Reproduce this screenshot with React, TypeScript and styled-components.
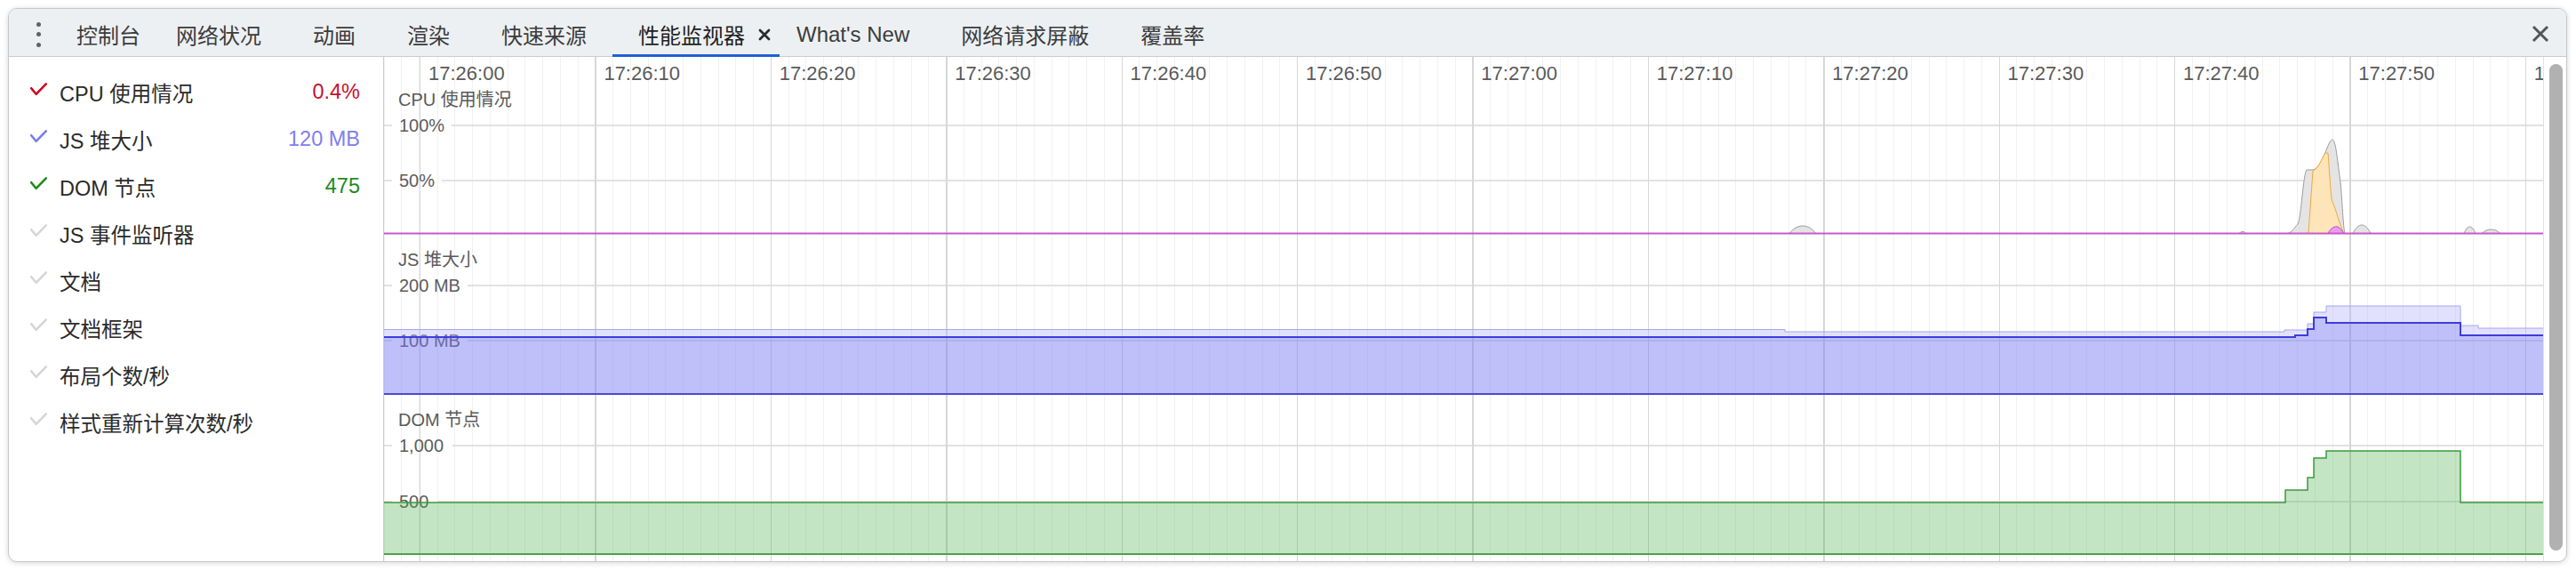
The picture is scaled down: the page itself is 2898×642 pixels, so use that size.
import React from 'react'
import styled, { createGlobalStyle, css } from 'styled-components'

const GlobalStyle = createGlobalStyle`
  html, body {
    margin: 0;
    background: #fff;
  }

  body {
    font-family: "Liberation Sans", "Noto Sans CJK SC", sans-serif;
  }
`

const PANE_WIDTH = 2429
const MAJOR = 197.4
const BASE = 167.5

type Seg = [number, number]

const stepPoints = (segs: Seg[], end: number): Seg[] => {
  const pts: Seg[] = []
  segs.forEach(([x, y], i) => {
    const next = i + 1 < segs.length ? segs[i + 1][0] : end
    pts.push([x, y], [next, y])
  })
  return pts
}

const toPath = (pts: Seg[]) => 'M' + pts.map(([x, y]) => `${x} ${y}`).join(' L')

const hump = (x1: number, x2: number, peak: number) => {
  const c = BASE - (BASE - peak) / 0.75
  const w = x2 - x1
  return `M${x1} ${BASE} C${x1 + w * 0.3} ${c} ${x1 + w * 0.7} ${c} ${x2} ${BASE} Z`
}

const Window = styled.div`
  box-sizing: border-box;
  height: 623px;
  margin: 9px 10px 10px 9px;
  display: flex;
  flex-direction: column;
  overflow: hidden;

  background: #fff;
  border: 1px solid #c5c8cb;
  border-radius: 10px;
  box-shadow: 0 1px 6px rgba(0, 0, 0, .16);
`

const TabBar = styled.div`
  flex-shrink: 0;
  box-sizing: border-box;
  height: 54px;
  display: flex;
  align-items: stretch;

  background: #edf0f2;
  border-bottom: 1px solid #c9ccd0;
`

const MenuButton = styled.div`
  width: 66px;
  padding-top: 4px;
  display: flex;
  flex-direction: column;
  align-items: center;
  justify-content: center;
  gap: 6.5px;
`

const Dot = styled.span`
  width: 5px;
  height: 5px;
  border-radius: 50%;
  background: #5f6368;
`

const TabStrip = styled.div`
  display: flex;
  align-items: stretch;
`

const Tab = styled.div<{ $active?: boolean }>`
  position: relative;
  display: flex;
  align-items: center;
  padding: 4px 29px 0;

  font-size: 24px;
  color: #3c3c3c;
  white-space: nowrap;

  &:first-child {
    padding-left: 10px;
    padding-right: 11px;
  }

  ${({ $active }) => $active && css`
    padding-right: 10px;
    margin-right: -10px;
    color: #1f1f1f;

    &::after {
      content: '';
      position: absolute;
      left: 0;
      right: 0;
      bottom: -1px;
      height: 3px;
      background: #1f5fd6;
    }
  `}
`

const TabClose = styled.svg`
  margin-left: 15px;
`

const Spacer = styled.div`
  flex: 1;
`

const CloseButton = styled.div`
  width: 40px;
  margin-right: 9px;
  padding-top: 2px;
  display: flex;
  align-items: center;
  justify-content: center;
`

const Body = styled.div`
  flex: 1;
  min-height: 0;
  display: flex;
`

const Sidebar = styled.div`
  flex-shrink: 0;
  box-sizing: border-box;
  width: 422px;
  padding: 13px 26px 0 24px;

  border-right: 1px solid #cdcdcd;
`

const MetricRow = styled.div`
  height: 53px;
  display: flex;
  align-items: center;

  font-size: 23.5px;
  color: #2b2b2b;
`

const Check = styled.svg`
  flex-shrink: 0;
  margin: 0 14px 6px 0;
`

const MetricName = styled.span`
  flex: 1;
`

const MetricValue = styled.span<{ $color: string }>`
  color: ${({ $color }) => $color};
`

const ChartPane = styled.div`
  flex: 1;
  min-width: 0;
  display: flex;
  flex-direction: column;
  overflow: hidden;

  border-right: 1px solid #e2e2e2;
  background-color: #fff;
  background-image:
    repeating-linear-gradient(to right, #d7d7d7 0 1.5px, transparent 1.5px ${MAJOR}px),
    repeating-linear-gradient(to right, #f1f1f1 0 1px, transparent 1px ${MAJOR / 10}px);
  background-position: 40px 0, 40px 0;
`

const TimeAxis = styled.div`
  flex-shrink: 0;
  height: 31px;
  padding-left: 40px;
  display: flex;
`

const TimeTick = styled.div`
  flex-shrink: 0;
  box-sizing: border-box;
  width: ${MAJOR}px;
  padding: 6px 0 0 10px;

  font-size: 22px;
  line-height: 26px;
  color: #5a5a5a;
`

const ChartBlock = styled.section`
  flex-shrink: 0;
  height: 180px;
  display: flex;
  flex-direction: column;
`

const ChartTitle = styled.div`
  box-sizing: border-box;
  height: 34px;
  padding: 5px 0 0 16px;

  font-size: 20px;
  line-height: 24px;
  color: #5a5a5a;
`

const Plot = styled.svg`
  display: block;
  width: 100%;
  height: 146px;
`

const AxisLabel = styled.text`
  font: 20px "Liberation Sans", sans-serif;
  fill: #5c5c5c;
  dominant-baseline: central;
`

const ScrollTrack = styled.div`
  flex-shrink: 0;
  box-sizing: border-box;
  width: 25px;
  padding: 8px 4px 12px 6px;
  display: flex;
`

const ScrollThumb = styled.div`
  flex: 1;
  background: #b1b1b1;
  border-radius: 8px;
`

interface GridLine {
  y: number
  label: string
  width: number
}

const HGrid = ({ lines }: { lines: GridLine[] }) => (
  <g>
    {lines.map(({ y, label, width }) => (
      <g key={label}>
        <path d={`M0 ${y} H9 M${17 + width + 8} ${y} H${PANE_WIDTH}`} stroke="#d9d9d9" strokeWidth={1.5} />
        <AxisLabel x={17} y={y}>{label}</AxisLabel>
      </g>
    ))}
  </g>
)

const tabs = ['控制台', '网络状况', '动画', '渲染', '快速来源']
const tabsAfter = ["What's New", '网络请求屏蔽', '覆盖率']

const metrics = [
  { name: 'CPU 使用情况', value: '0.4%', color: '#c8102e', check: '#d0021b' },
  { name: 'JS 堆大小', value: '120 MB', color: '#8080ee', check: '#7b7bee' },
  { name: 'DOM 节点', value: '475', color: '#1d8b1d', check: '#1a8a1a' },
  { name: 'JS 事件监听器' },
  { name: '文档' },
  { name: '文档框架' },
  { name: '布局个数/秒' },
  { name: '样式重新计算次数/秒' },
]

const times = [
  '17:26:00', '17:26:10', '17:26:20', '17:26:30', '17:26:40', '17:26:50', '17:27:00',
  '17:27:10', '17:27:20', '17:27:30', '17:27:40', '17:27:50', '17:28:00',
]

const cpuTotal = 'M2141 167.5 C2146 167 2149 161 2153 157 C2157 150 2159 100 2163 96 L2170 96 '
  + 'C2176 95 2180 85 2185 74 C2188 66 2190 62 2192 62 C2196 62 2198 90 2201 110 C2203 130 2204 160 2206 167.5 Z'
const cpuScript = 'M2165 167.5 L2170 97 C2174 95 2176 92 2178 88 C2181 83 2183 77 2185 77 L2187 77 '
  + 'C2189 100 2190 128 2192 132 C2196 140 2200 158 2205 167.5 Z'
const cpuStyle = 'M2187 167.5 C2190 161 2195 159 2198 160 C2201 161 2203 165 2205 167.5 Z'
const cpuHumps = [hump(1581, 1611, 159), hump(2087, 2095, 165.5), hump(2215, 2235, 158), hump(2340, 2353, 160), hump(2360, 2381, 163)]

const heapTotal: Seg[] = [[0, 95.5], [1576, 98], [2138, 96], [2164, 89], [2171, 76], [2185, 69], [2336, 91], [2356, 94]]
const heapUsed: Seg[] = [[0, 104], [2150, 102], [2164, 95], [2171, 82], [2185, 88], [2336, 102]]
const domNodes: Seg[] = [[0, 110], [2139, 96], [2164, 82], [2171, 60], [2185, 52], [2336, 110]]

const heapTotalPts = stepPoints(heapTotal, PANE_WIDTH)
const heapUsedPts = stepPoints(heapUsed, PANE_WIDTH)
const domPts = stepPoints(domNodes, PANE_WIDTH)

const CheckIcon = ({ color }: { color: string }) => (
  <Check width={19} height={15} viewBox="0 0 19 15">
    <path d="M1.2 6.2 L6.6 12.8 L17.8 1.4" fill="none" stroke={color} strokeWidth={2.6} strokeLinecap="round" strokeLinejoin="round" />
  </Check>
)

const App: React.FC = () => (
  <>
    <GlobalStyle />
    <Window>
      <TabBar>
        <MenuButton>
          <Dot />
          <Dot />
          <Dot />
        </MenuButton>
        <TabStrip>
          {tabs.map((t) => <Tab key={t}>{t}</Tab>)}
          <Tab $active>
            性能监视器
            <TabClose width={14} height={14} viewBox="0 0 14 14">
              <path d="M2 2 L12 12 M12 2 L2 12" stroke="#2a2a2a" strokeWidth={2.8} strokeLinecap="round" />
            </TabClose>
          </Tab>
          {tabsAfter.map((t) => <Tab key={t}>{t}</Tab>)}
        </TabStrip>
        <Spacer />
        <CloseButton>
          <svg width={20} height={20} viewBox="0 0 20 20">
            <path d="M2 2 L18 18 M18 2 L2 18" stroke="#555" strokeWidth={3} />
          </svg>
        </CloseButton>
      </TabBar>
      <Body>
        <Sidebar>
          {metrics.map((m) => (
            <MetricRow key={m.name}>
              <CheckIcon color={m.check ?? '#d6d6d6'} />
              <MetricName>{m.name}</MetricName>
              {m.value && <MetricValue $color={m.color}>{m.value}</MetricValue>}
            </MetricRow>
          ))}
        </Sidebar>
        <ChartPane>
          <TimeAxis>
            {times.map((t) => <TimeTick key={t}>{t}</TimeTick>)}
          </TimeAxis>

          <ChartBlock>
            <ChartTitle>CPU 使用情况</ChartTitle>
            <Plot viewBox={`0 34 ${PANE_WIDTH} 146`}>
              <HGrid lines={[{ y: 46, label: '100%', width: 51 }, { y: 108, label: '50%', width: 40 }]} />
              {cpuHumps.map((d) => <path key={d} d={d} fill="#e4e4e4" stroke="#9c9c9c" strokeWidth={1} />)}
              <path d={cpuTotal} fill="#e4e4e4" stroke="#9c9c9c" strokeWidth={1} />
              <path d={cpuScript} fill="#fde4b9" stroke="#f0a73a" strokeWidth={1} />
              <path d={cpuStyle} fill="#e79cf0" stroke="#c050c8" strokeWidth={1} />
              <path d={`M0 ${BASE} H${PANE_WIDTH}`} stroke="#c45ac8" strokeWidth={2} />
            </Plot>
          </ChartBlock>

          <ChartBlock>
            <ChartTitle>JS 堆大小</ChartTitle>
            <Plot viewBox={`0 34 ${PANE_WIDTH} 146`}>
              <HGrid lines={[{ y: 46, label: '200 MB', width: 69 }, { y: 108, label: '100 MB', width: 69 }]} />
              <path d={toPath([...heapTotalPts, ...[...heapUsedPts].reverse()]) + ' Z'} fill="rgba(180, 180, 250, .4)" />
              <path d={toPath(heapTotalPts)} fill="none" stroke="#a6a6f0" strokeWidth={1} />
              <path d={toPath(heapUsedPts) + ` L${PANE_WIDTH} 168 L0 168 Z`} fill="rgba(120, 120, 245, .47)" />
              <path d={toPath(heapUsedPts)} fill="none" stroke="#3d3ddb" strokeWidth={2} />
              <path d={`M0 168 H${PANE_WIDTH}`} stroke="#4848d8" strokeWidth={2} />
            </Plot>
          </ChartBlock>

          <ChartBlock>
            <ChartTitle>DOM 节点</ChartTitle>
            <Plot viewBox={`0 34 ${PANE_WIDTH} 146`}>
              <HGrid lines={[{ y: 46, label: '1,000', width: 52 }, { y: 109, label: '500', width: 35 }]} />
              <path d={toPath(domPts) + ` L${PANE_WIDTH} 168 L0 168 Z`} fill="rgba(80, 180, 80, .34)" />
              <path d={toPath(domPts)} fill="none" stroke="#3d9a3d" strokeWidth={1.5} />
              <path d={`M0 168 H${PANE_WIDTH}`} stroke="#4fa04f" strokeWidth={2} />
            </Plot>
          </ChartBlock>
        </ChartPane>
        <ScrollTrack>
          <ScrollThumb />
        </ScrollTrack>
      </Body>
    </Window>
  </>
)

export default App
